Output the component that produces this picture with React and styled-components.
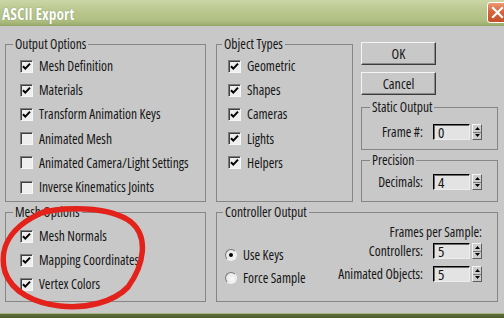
import React from 'react';
import styled, { createGlobalStyle } from 'styled-components';

const FONT = `"Open Sans", "Liberation Sans", sans-serif`;

const Global = createGlobalStyle`
  *, *::before, *::after { box-sizing: border-box; }
  html, body { margin: 0; padding: 0; background: #c8c8c8; }
  body {
    font-family: ${FONT};
    font-stretch: 77%;
    font-size: 13.5px;
    color: #151515;
    overflow: hidden;
  }
`;

const Window = styled.div`
  position: relative;
  width: 504px;
  height: 318px;
  overflow: hidden;
  display: flex;
  flex-direction: column;
  background: #c8c8c8;
`;

const TitleBar = styled.div`
  height: 26px;
  flex: none;
  display: flex;
  align-items: center;
  justify-content: space-between;
  padding-left: 2px;
  overflow: hidden;
  background: linear-gradient(#ccd6a5 0%, #bcc992 35%, #afbf82 80%, #9cad6e 96%, #8e9f60 100%);
`;

const Title = styled.span`
  font-weight: bold;
  font-size: 15.5px;
  color: #fff;
  text-shadow: 0 0 1px rgba(70, 85, 35, 0.7);
  margin-top: 1px;
`;

const CloseBtn = styled.div`
  width: 21px;
  height: 21px;
  margin-right: -4px;
  margin-top: -1px;
  border: 1px solid #fff;
  border-radius: 3px;
  background: linear-gradient(#ec9a74, #d8623a 45%, #c4502c);
  display: flex;
  align-items: center;
  justify-content: center;
`;

const Body = styled.div`
  flex: 1;
  display: grid;
  grid-template-columns: 201px 10px 137px 8px 137px;
  grid-template-rows: 165px 97px;
  row-gap: 3px;
  padding: 11px 0 0 5px;
`;

const Group = styled.fieldset`
  margin: ${p => p.$mt || 0}px 0 0 0;
  min-width: 0;
  height: ${p => p.$h}px;
  border: 1px solid #868686;
  padding: 0;
  grid-column: ${p => p.$col};
`;

const Legend = styled.legend`
  padding: 0 2px;
  margin-left: ${p => p.$ml || 7}px;
  line-height: 15px;
  color: #151515;
`;

const Content = styled.div`
  padding: ${p => p.$pad};
`;

const RightCol = styled.div`
  grid-column: 5;
  display: flex;
  flex-direction: column;
  padding-top: 5px;
`;

const Button = styled.div`
  width: 75px;
  height: 23px;
  flex: none;
  margin-bottom: ${p => p.$mb}px;
  display: flex;
  align-items: center;
  justify-content: center;
  font-size: 14px;
  border: 1px solid;
  border-color: #f4f4f4 #3c3c3c #3c3c3c #f4f4f4;
  box-shadow: inset -1px -1px 0 #8a8a8a;
  background: #c8c8c8;
`;

const CheckRow = styled.div`
  height: ${p => p.$h || 24}px;
  display: flex;
  align-items: center;
  gap: 6px;
  white-space: nowrap;
`;

const Box = styled.span`
  width: 13px;
  height: 13px;
  flex: none;
  border: 1px solid;
  border-color: #7c7c7c #f6f6f6 #f6f6f6 #7c7c7c;
  box-shadow: inset 1px 1px 0 #404040;
  background: #eeeeee;
  display: flex;
  align-items: center;
  justify-content: center;
`;

const FieldRow = styled.div`
  display: flex;
  align-items: center;
  justify-content: flex-end;
  height: 16px;
  white-space: nowrap;
`;

const FieldLabel = styled.span`
  margin-right: 10px;
`;

const Input = styled.div`
  width: 37px;
  height: 16px;
  border: 1px solid;
  border-color: #000 #ededed #ededed #000;
  box-shadow: inset 1px 1px 0 #6a6a6a;
  background: #e3e3e3;
  padding-left: 4px;
  line-height: 14px;
  font-size: 15px;
`;

const Spin = styled.div`
  width: 10px;
  height: 16px;
  margin-left: 2px;
  border: 1px solid;
  border-color: #f4f4f4 #5e5e5e #5e5e5e #f4f4f4;
  background: #cdcdcd;
  display: flex;
  flex-direction: column;
`;

const SpinHalf = styled.div`
  flex: 1;
  display: flex;
  align-items: center;
  justify-content: center;
  border-top: ${p => (p.$down ? '1px solid #7a7a7a' : 'none')};
`;

const Controller = styled.div`
  display: grid;
  grid-template-columns: auto 1fr;
  grid-template-rows: 23px 23px 23px;
  padding: 0 15px 0 8px;
`;

const FramesHead = styled.div`
  grid-column: 1 / 3;
  display: flex;
  align-items: center;
  justify-content: flex-end;
`;

const RadioRow = styled.div`
  display: flex;
  align-items: center;
  gap: 6px;
  white-space: nowrap;
`;

const Radio = styled.span`
  width: 12px;
  height: 12px;
  flex: none;
  border-radius: 50%;
  border: 1px solid;
  border-color: #7a7a7a #f2f2f2 #f2f2f2 #7a7a7a;
  background: radial-gradient(circle at 60% 60%, #fafafa 0%, #e6e6e6 70%, #bdbdbd 100%);
  display: flex;
  align-items: center;
  justify-content: center;
  &::after {
    content: '';
    width: 4px;
    height: 4px;
    border-radius: 50%;
    background: ${p => (p.$on ? '#000' : 'transparent')};
  }
`;

const Desktop = styled.div`
  height: 5px;
  flex: none;
  background: linear-gradient(#a9b880 0, #a9b880 1px, #5f6f3a 1px, #4e5c2e 100%);
`;

const Annotation = styled.svg`
  position: absolute;
  left: 0;
  top: 0;
  pointer-events: none;
`;

const Check = () => (
  <svg width="9" height="9" viewBox="0 0 9 9">
    <path d="M1 4.2 L3.3 6.6 L8 1.6" fill="none" stroke="#000" strokeWidth="2" />
  </svg>
);

const CheckBox = ({ on, children, h }) => (
  <CheckRow $h={h}>
    <Box>{on && <Check />}</Box>
    <span>{children}</span>
  </CheckRow>
);

const Spinner = () => (
  <Spin>
    <SpinHalf>
      <svg width="5" height="3" viewBox="0 0 5 3"><path d="M2.5 0 L5 3 L0 3 Z" fill="#000" /></svg>
    </SpinHalf>
    <SpinHalf $down>
      <svg width="5" height="3" viewBox="0 0 5 3"><path d="M0 0 L5 0 L2.5 3 Z" fill="#000" /></svg>
    </SpinHalf>
  </Spin>
);

const Field = ({ label, value }) => (
  <FieldRow>
    <FieldLabel>{label}</FieldLabel>
    <Input>{value}</Input>
    <Spinner />
  </FieldRow>
);

const outputOpts = [
  ['Mesh Definition', true],
  ['Materials', true],
  ['Transform Animation Keys', true],
  ['Animated Mesh', false],
  ['Animated Camera/Light Settings', false],
  ['Inverse Kinematics Joints', false],
];

const objectTypes = ['Geometric', 'Shapes', 'Cameras', 'Lights', 'Helpers'];
const meshOpts = ['Mesh Normals', 'Mapping Coordinates', 'Vertex Colors'];

export default function App() {
  return (
    <Window>
      <Global />
      <TitleBar>
        <Title>ASCII Export</Title>
        <CloseBtn>
          <svg width="13" height="13" viewBox="0 0 13 13">
            <path d="M2 2 L11 11 M11 2 L2 11" stroke="#fff" strokeWidth="2.2" strokeLinecap="square" />
          </svg>
        </CloseBtn>
      </TitleBar>
      <Body>
        <Group $h={165} $col={1}>
          <Legend>Output Options</Legend>
          <Content $pad="2px 0 0 14px">
            {outputOpts.map(([t, on]) => (
              <CheckBox key={t} on={on} h={24.2}>{t}</CheckBox>
            ))}
          </Content>
        </Group>
        <Group $h={165} $col={3}>
          <Legend $ml={5}>Object Types</Legend>
          <Content $pad="2px 0 0 11px">
            {objectTypes.map(t => (
              <CheckBox key={t} on h={24.2}>{t}</CheckBox>
            ))}
          </Content>
        </Group>
        <RightCol>
          <Button $mb={7}>OK</Button>
          <Button $mb={5}>Cancel</Button>
          <Group $h={50}>
            <Legend $ml={8}>Static Output</Legend>
            <Content $pad="9px 15px 0 0">
              <Field label="Frame #:" value="0" />
            </Content>
          </Group>
          <Group $h={49} $mt={3}>
            <Legend $ml={8}>Precision</Legend>
            <Content $pad="6px 15px 0 0">
              <Field label="Decimals:" value="4" />
            </Content>
          </Group>
        </RightCol>
        <Group $h={97} $col={1}>
          <Legend>Mesh Options</Legend>
          <Content $pad="4px 0 0 14px">
            {meshOpts.map(t => (
              <CheckBox key={t} on>{t}</CheckBox>
            ))}
          </Content>
        </Group>
        <Group $h={97} $col="3 / 6">
          <Legend $ml={6}>Controller Output</Legend>
          <Controller>
            <FramesHead>Frames per Sample:</FramesHead>
            <RadioRow><Radio $on /><span>Use Keys</span></RadioRow>
            <Field label="Controllers:" value="5" />
            <RadioRow><Radio /><span>Force Sample</span></RadioRow>
            <Field label="Animated Objects:" value="5" />
          </Controller>
        </Group>
      </Body>
      <Desktop />
      <Annotation width="504" height="318" viewBox="0 0 504 318">
        <path
          d="M38 214 C 62 206, 110 206, 131 222 C 149 237, 144 265, 128 287 C 114 302, 86 309, 60 306 C 34 303, 12 292, 5 272 C 0 254, 6 238, 20 226 C 28 219, 36 215, 48 210"
          fill="none"
          stroke="#e3231b"
          strokeWidth="5.5"
          strokeLinecap="round"
          strokeLinejoin="round"
        />
      </Annotation>
    </Window>
  );
}
